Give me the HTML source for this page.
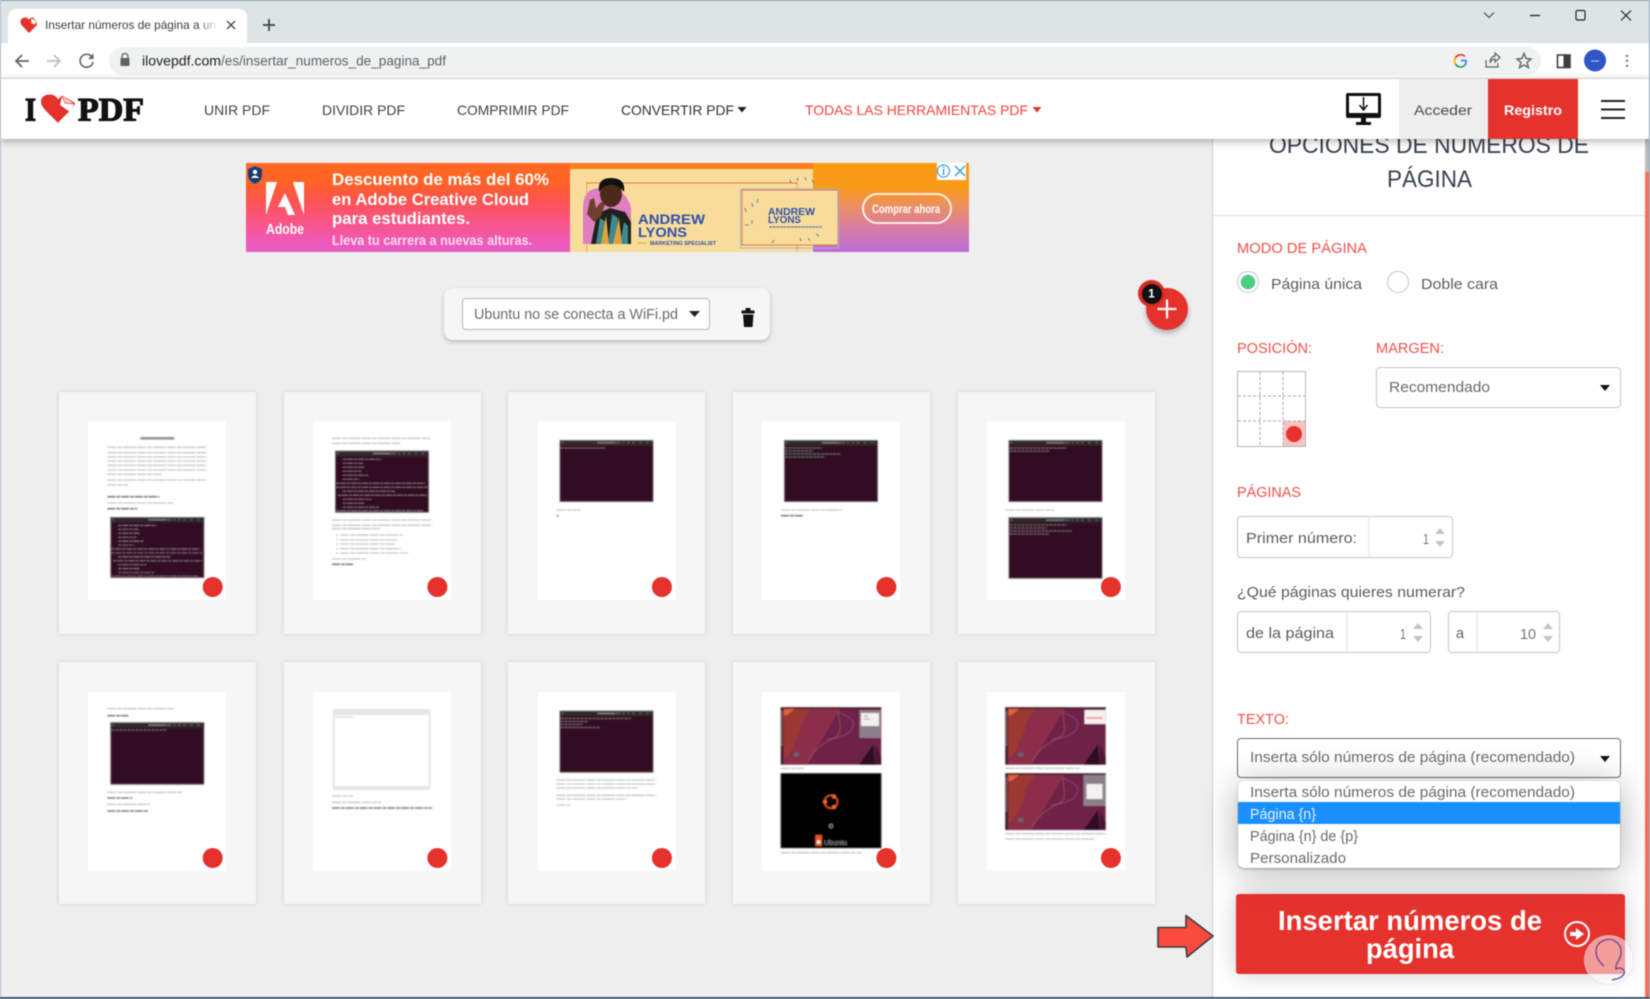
<!DOCTYPE html>
<html lang="es"><head><meta charset="utf-8"><title>Insertar números de página a un PDF</title>
<style>
html,body{margin:0;padding:0;background:#eee;width:1650px;height:999px;overflow:hidden}
#w{position:relative;width:1650px;height:999px;overflow:hidden;background:#eee;filter:blur(.4px)}
#w>div,#w>svg{position:absolute}
svg{display:block}
text{font-family:"Liberation Sans",sans-serif}
.card{width:197px;height:242px;background:#f6f6f6;box-shadow:0 0 4px rgba(0,0,0,.13)}
.pg{width:138px;height:179px;background:#fff}
.box{background:#fff;border:1px solid #c6c6c6;border-radius:4px;box-sizing:border-box}
.s{fill:#5c5c5c;font-size:15px}
.r{fill:#f0504a;font-size:15px}
.n{fill:#3f4449;font-size:14px}
.o{fill:#6a6a6a;font-size:15px}
.l{stroke:#b8b8b8;stroke-width:1.1;stroke-dasharray:9 1 5 .8 13 1;fill:none}
.d{stroke:#666;stroke-width:1.3;stroke-dasharray:8 1 4 .8;fill:none}
.sp{fill:#c4c4c4}
.th{filter:url(#b)}
</style></head><body><div id="w">

<!-- panel -->
<div style="left:1212px;top:130px;width:433px;height:867px;background:#fff;border-left:1px solid #cfcfcf;box-sizing:border-box"></div>
<div style="left:1213px;top:215px;width:432px;height:1px;background:#ddd"></div>
<div style="left:1645px;top:130px;width:4px;height:42px;background:#bdbdbd"></div>
<div style="left:1645px;top:172px;width:4px;height:825px;background:#fc6e5c"></div>

<!-- ad -->
<div style="left:246px;top:163px;width:324px;height:89px;background:linear-gradient(180deg,#ff6a22 0%,#ff6226 22%,#fd5350 42%,#f9568a 68%,#ef58b6 88%,#e55ec6 100%)"></div>
<div style="left:813px;top:163px;width:156px;height:89px;background:linear-gradient(180deg,#fc9a14 0%,#f99a1a 28%,#ec8f62 48%,#d97ea0 72%,#bd6cd8 100%)"></div>
<div style="left:570px;top:163px;width:243px;height:6px;background:#fd7d1c"></div>
<div style="left:570px;top:169px;width:243px;height:83px;background:#f8dc9a"></div>

<!-- toolbar card -->
<div style="left:444px;top:288px;width:326px;height:52px;background:#f6f6f6;border-radius:9px;box-shadow:0 2px 4px rgba(0,0,0,.22)"></div>
<div class="box" style="left:462px;top:298px;width:248px;height:32px;border-color:#b5b5bb"></div>

<!-- cards -->
<div class="card" style="left:59px;top:392px"></div><div class="card" style="left:284px;top:392px"></div><div class="card" style="left:508.4px;top:392px"></div><div class="card" style="left:733px;top:392px"></div><div class="card" style="left:958px;top:392px"></div>
<div class="card" style="left:59px;top:662px"></div><div class="card" style="left:284px;top:662px"></div><div class="card" style="left:508.4px;top:662px"></div><div class="card" style="left:733px;top:662px"></div><div class="card" style="left:958px;top:662px"></div>
<div class="pg" style="left:88.3px;top:421px"></div><div class="pg" style="left:313px;top:421px"></div><div class="pg" style="left:537.5px;top:421px"></div><div class="pg" style="left:762px;top:421px"></div><div class="pg" style="left:986.5px;top:421px"></div>
<div class="pg" style="left:88.3px;top:692px"></div><div class="pg" style="left:313px;top:692px"></div><div class="pg" style="left:537.5px;top:692px"></div><div class="pg" style="left:762px;top:692px"></div><div class="pg" style="left:986.5px;top:692px"></div>

<!-- plus -->
<div style="left:1146px;top:288px;width:42px;height:42px;border-radius:50%;background:#e5322d;box-shadow:0 3px 6px rgba(0,0,0,.28)"></div>
<div style="left:1138px;top:280px;width:27px;height:27px;border-radius:50%;background:#d92a26"></div>
<div style="left:1141.500px;top:283.500px;width:20px;height:20px;border-radius:50%;background:#111"></div>

<!-- form boxes -->
<div class="box" style="left:1376px;top:367px;width:245px;height:41px"></div>
<div class="box" style="left:1237px;top:516px;width:216px;height:42px"></div>
<div style="left:1368px;top:517px;width:2px;height:40px;background:#efefef"></div>
<div class="box" style="left:1237px;top:611px;width:194px;height:42px"></div>
<div style="left:1346px;top:612px;width:2px;height:40px;background:#efefef"></div>
<div class="box" style="left:1448px;top:611px;width:112px;height:42px"></div>
<div style="left:1476px;top:612px;width:2px;height:40px;background:#efefef"></div>
<div class="box" style="left:1237px;top:738px;width:384px;height:40px;border-color:#6d6d6d"></div>
<div style="left:1236px;top:894px;width:389px;height:80px;background:#e5322d;border-radius:3px;box-shadow:0 0 24px rgba(0,0,0,.2)"></div>
<div style="left:1238px;top:781px;width:382px;height:87px;background:#fff;border-radius:6px;box-shadow:0 4px 36px rgba(0,0,0,.3),0 1px 2px rgba(0,0,0,.3)"></div>
<div style="left:1238px;top:802px;width:382px;height:22px;background:#1a90ff"></div>

<svg width="1650" height="999" viewBox="0 0 1650 999" style="left:0;top:0">
<defs>
<filter id="b" x="-5%" y="-5%" width="110%" height="110%"><feGaussianBlur stdDeviation=".5"/></filter>
<symbol id="term" viewBox="0 0 94 62" preserveAspectRatio="none">
<rect width="94" height="62" fill="#330a22"/><rect width="94" height="5.5" fill="#2d2b2c"/>
<path d="M38 2.8H56" stroke="#999" stroke-width="1"/><path d="M2 2.8h2M55 2.8h6M63 2.8h2M68 2.8h2M73 2.8h2M80 2.8h2M87 2.8h2" stroke="#666" stroke-width="1.2"/>
<rect x=".3" y=".3" width="93.4" height="61.4" fill="none" stroke="#8c8088" stroke-width=".6"/>
</symbol>
<symbol id="tf" viewBox="0 0 94 62" preserveAspectRatio="none">
<use href="#term" width="94" height="62"/>
<path d="M8 8.5H46M8 12.5H28M8 16.5H30M8 20.5H26M8 24.5H34M8 28.5H24M1 32.5H90M1 36.5H92M8 40.5H60M3 44.5H92M8 48.5H36M8 52.5H30M8 56.5H44M1 60H88" stroke="#a08c98" stroke-width=".7" stroke-dasharray="3 1 6 1" fill="none"/>
</symbol>
<symbol id="wp" viewBox="0 0 100 57" preserveAspectRatio="none">
<rect width="100" height="57" fill="#6e2447"/>
<path d="M3 0H60L26 57H3Z" fill="#8c2e48"/><path d="M3 0H32Q18 14 20 22L8 48 3 50Z" fill="#9c3732"/>
<path d="M3 0H16L6 8H3Z" fill="#e0623c"/><path d="M0 0H100V1.5H0Z" fill="#2c1420"/>
<path d="M78 57L92 37 94 57Z" fill="#2f0f22"/><path d="M94 57V37L100 50V57Z" fill="#4a1733"/>
<path d="M27 53C35 40 42 36 54 30 62 26 58 14 57 4" stroke="#a8685a" stroke-width="1" stroke-dasharray="1.4 1.2" fill="none"/>
<path d="M46 32C58 30 70 28 72 18 73 10 62 8 57 4" stroke="#9a4c9c" stroke-width="1.1" stroke-dasharray="1.4 1" fill="none"/>
<path d="M0 0H2.5V57H0Z" fill="#3a2030"/><path d="M1.2 4V38" stroke="#a8806c" stroke-width="1.2" stroke-dasharray="1.5 1"/>
<rect x="13" y="45" width="5" height="4" fill="#5a6a70"/>
</symbol>
<linearGradient id="fd" x1="0" x2="1" y1="0" y2="0"><stop offset="0" stop-color="#fff" stop-opacity="0"/><stop offset="1" stop-color="#fff"/></linearGradient>
</defs>

<!-- Ad content -->
<g fill="#fff" font-weight="bold">
<text x="332" y="185" font-size="17" textLength="217" lengthAdjust="spacingAndGlyphs">Descuento de más del 60%</text>
<text x="332" y="205" font-size="17" textLength="197" lengthAdjust="spacingAndGlyphs">en Adobe Creative Cloud</text>
<text x="332" y="224" font-size="17" textLength="138" lengthAdjust="spacingAndGlyphs">para estudiantes.</text>
<text x="332" y="245" font-size="13.5" fill="#fde" textLength="200" lengthAdjust="spacingAndGlyphs">Lleva tu carrera a nuevas alturas.</text>
<text x="266" y="234" font-size="15" font-weight="bold" textLength="38" lengthAdjust="spacingAndGlyphs">Adobe</text>
</g>
<path d="M266 182H277L266 215ZM293 182H304V215ZM285 193L295 215H288L285 207H278Z" fill="#fff"/>
<path d="M255 166L262 169V175Q262 181 255 184 248 181 248 175V169Z" fill="#23386a" stroke="#56709c" stroke-width=".7"/>
<circle cx="255" cy="172" r="2.2" fill="#fff"/><path d="M251 178Q255 173 259 178" fill="#fff"/>
<rect x="937" y="163" width="29" height="17" fill="#fff"/>
<circle cx="943.5" cy="171" r="6" fill="none" stroke="#3aa0d8" stroke-width="1.2"/><path d="M943.5 169V175M943.5 166.5V168" stroke="#3aa0d8" stroke-width="1.5"/>
<path d="M955 166L965 176M965 166L955 176" stroke="#3aa0d8" stroke-width="1.5"/>
<path d="M587 252V183H797V252" fill="none" stroke="#f0763a" stroke-width="1"/>
<rect x="587" y="184" width="210" height="68" fill="#f8dc9a"/>
<path d="M583 244V208Q583 188 600 188 626 186 631 208V244Z" fill="#dd7fc0"/>
<path d="M591 244L597 214 610 208 625 212 631 222V244Z" fill="#22201e"/>
<path d="M596 244L600 218 606 222 604 244ZM608 244L612 214 618 218 616 244ZM620 244L624 222 628 226 628 244Z" fill="#3f8a8c"/>
<path d="M601 244L606 216 609 244M613 244L619 218 622 244" fill="#e0a23c"/>
<ellipse cx="611" cy="194" rx="11" ry="13" fill="#4b2a1b"/>
<path d="M599 192Q597 178 611 178 626 178 624 192 618 184 610 185 603 185 599 192Z" fill="#111"/>
<path d="M596 208L601 202 605 204 601 216 594 222 587 214 590 200 594 198Z" fill="#6e4030"/>
<g fill="#2f50ae" font-weight="bold">
<text x="638" y="224" font-size="14" textLength="67" lengthAdjust="spacingAndGlyphs">ANDREW</text>
<text x="638" y="237" font-size="14" textLength="49" lengthAdjust="spacingAndGlyphs">LYONS</text>
<text x="650" y="245" font-size="5" textLength="66" lengthAdjust="spacingAndGlyphs">MARKETING SPECIALIST</text>
</g>
<path d="M638 243H647" stroke="#f0a030"/>
<rect x="742" y="190" width="96" height="55" fill="#f8dc9a" stroke="#f0763a"/>
<rect x="740.5" y="189" width="98" height="59" fill="none" stroke="#8fb8e4" stroke-width=".9"/>
<g fill="#2f50ae" font-weight="bold">
<text x="768" y="215" font-size="10" textLength="47" lengthAdjust="spacingAndGlyphs">ANDREW</text>
<text x="768" y="223" font-size="10" textLength="33" lengthAdjust="spacingAndGlyphs">LYONS</text>
</g>
<path d="M769 227H822" stroke="#6a7aa8" stroke-width="1.3" stroke-dasharray="3 .6"/>
<path d="M745 208l1 4M752 203l1 4M758 199l-1 4M745 225h4M752 220v4M772 243l2-3M805 177l1 3M798 178l-1 3M790 180l1 3M812 180l2 3M816 234l3 2M808 238l2 3M800 238l1 3" stroke="#4a6ea8" stroke-width=".8"/>
<rect x="863" y="194" width="88" height="29" rx="14.5" fill="none" stroke="#fff" stroke-width="1.8" opacity=".95"/>
<text x="872" y="213" font-size="11.5" font-weight="bold" fill="#fff" textLength="68" lengthAdjust="spacingAndGlyphs">Comprar ahora</text>

<!-- file select -->
<text x="474" y="319" font-size="15" fill="#6a6a6a" textLength="204" lengthAdjust="spacingAndGlyphs">Ubuntu no se conecta a WiFi.pd</text>
<path d="M689 311H700L694.500 317Z" fill="#222"/>
<path d="M741.500 310.500H754.500V313.500H741.500ZM745.500 308H750.500V310.500H745.500ZM743 314.500H753.500L752.500 327H744Z" fill="#111"/>

<!-- plus glyph -->
<path d="M1167 299.500V318.500M1157.500 309H1176.500" stroke="#fff" stroke-width="2.200"/>
<text x="1151.500" y="297.500" font-size="12" font-weight="bold" fill="#fff" text-anchor="middle">1</text>

<!-- Page 1 -->
<g class="th" transform="translate(88.300 421)">
<path d="M52 17.300H86" stroke="#8a8a8a" stroke-width="2.400"/>
<path class="l" d="M19 26.300H119M19 31.700H119M19 36H119M19 40H119M19 44.300H119M19 49H119M19 53.300H73M19 59H119M19 64H40"/>
<path class="d" d="M19 75.700H71M19 87.700H49"/><path class="l" d="M19 82H85"/>
<use href="#tf" x="22" y="96" width="94" height="61"/>
</g>
<!-- Page 2 -->
<g class="th" transform="translate(313 421)">
<path class="l" d="M19 17.300H118M19 22.300H87M19 99H119M19 104.300H119M19 107.700H67M27 114H90M27 119H84M27 123H82M27 127.700H88M27 132H95M19 138H53"/>
<path d="M23.700 114h1M23.700 119h1M23.700 123h1M23.700 127.700h1M23.700 132h1" stroke="#777"/>
<path class="d" d="M19 143.300H40"/>
<use href="#tf" x="22" y="29.700" width="94" height="62"/>
</g>
<!-- Page 3 -->
<g class="th" transform="translate(537.500 421)">
<use href="#term" x="22" y="19" width="94" height="62"/>
<path d="M23 27H68" stroke="#98808e" stroke-width=".7" stroke-dasharray="3 1"/>
<path class="l" d="M19 89H43"/><path class="d" d="M19 94.700H21"/>
</g>
<!-- Page 4 -->
<g class="th" transform="translate(762 421)">
<use href="#term" x="22" y="19" width="94" height="62"/>
<path d="M23 27H60M23 30H50M23 33H78M23 36H62" stroke="#7c8c84" stroke-width=".7" stroke-dasharray="3 1"/>
<path class="l" d="M19 89H80"/><path class="d" d="M19 94.700H41"/>
</g>
<!-- Page 5 -->
<g class="th" transform="translate(986.500 421)">
<use href="#term" x="22" y="19" width="94" height="62"/>
<path d="M23 27H80M23 30H62" stroke="#98808e" stroke-width=".7" stroke-dasharray="3 1"/>
<path class="l" d="M19 89H67"/>
<use href="#term" x="22" y="96.300" width="94" height="61.400"/>
<path d="M23 104H80M23 107H60M23 110H85M23 113H62" stroke="#98808e" stroke-width=".7" stroke-dasharray="3 1"/>
</g>
<!-- Page 6 -->
<g class="th" transform="translate(88.300 692)">
<path class="l" d="M19 16.700H85.500M19 100.300H94M19 112.300H61"/><path class="d" d="M19 23.700H40M19 106H44M19 119H60"/>
<use href="#term" x="22" y="30.300" width="94" height="62.400"/>
<path d="M23 38H78" stroke="#98808e" stroke-width=".8" stroke-dasharray="3 1"/>
</g>
<!-- Page 7 -->
<g class="th" transform="translate(313 692)">
<rect x="20.600" y="18" width="96" height="79.300" rx="1.500" fill="#fff" stroke="#ddd" stroke-width="1.500"/>
<rect x="20.600" y="18" width="96" height="5" fill="#e6e6e6"/><path d="M22 25H40" stroke="#ccc"/><rect x="20.600" y="94" width="96" height="3.300" fill="#e6e6e6"/>
<path class="l" d="M19 104H40M19 110.300H68"/><path class="d" d="M19 116H119"/>
</g>
<!-- Page 8 -->
<g class="th" transform="translate(537.500 692)">
<use href="#term" x="22" y="18.700" width="94" height="62"/>
<path d="M23 26.500H93M23 29.500H50M23 32.500H45M23 35.500H62" stroke="#98808e" stroke-width=".7" stroke-dasharray="3 1"/>
<path class="l" d="M19 88H119M19 92H119M19 96H100M19 103.300H119M19 107H90M19 113H33"/>
</g>
<!-- Page 9 -->
<g class="th" transform="translate(762 692)">
<use href="#wp" x="18.700" y="15.300" width="100.600" height="57.400"/>
<rect x="97.500" y="18" width="21" height="28" fill="#8c8088"/><rect x="99" y="21" width="18" height="13" fill="#f4f0f0"/>
<path d="M102 24h4M102 27h6" stroke="#999"/>
<path class="l" d="M19 76.300H42M19 160.700H100"/>
<rect x="18.700" y="81.300" width="100.600" height="74.700" fill="#000" stroke="#555" stroke-width=".5"/>
<circle cx="69" cy="109.700" r="6.500" fill="none" stroke="#e95420" stroke-width="1.500"/>
<circle cx="63" cy="109.700" r="2" fill="#f06a30"/><circle cx="72" cy="104.500" r="2" fill="#f06a30"/><circle cx="72" cy="115" r="2" fill="#f06a30"/>
<circle cx="69" cy="134" r="1.800" fill="none" stroke="#bbb" stroke-width=".7"/>
<rect x="53.300" y="143" width="6.700" height="11" fill="#e95420"/><circle cx="56.600" cy="150" r="1.800" fill="#fff"/>
<text x="62" y="153" font-size="7.500" fill="#999" textLength="23" lengthAdjust="spacingAndGlyphs">Ubuntu</text>
</g>
<!-- Page 10 -->
<g class="th" transform="translate(986.500 692)">
<use href="#wp" x="18.700" y="15.300" width="100.600" height="57.400"/>
<rect x="98" y="18" width="21" height="14" fill="#f6efef"/><path d="M100 26h16" stroke="#e88" stroke-width="1.500"/>
<path class="l" d="M19 76.300H94M19 141.700H119.500M19 147H109"/>
<use href="#wp" x="18.700" y="81.300" width="100.600" height="56.700"/>
<rect x="97" y="83" width="22" height="31" fill="#8c8088"/><rect x="100" y="92" width="16" height="15" fill="#f4f0f0"/>
</g>
<!-- dots -->
<g fill="#e5322d">
<circle cx="212.700" cy="587" r="10"/><circle cx="437.400" cy="587" r="10"/><circle cx="661.900" cy="587" r="10"/><circle cx="886.400" cy="587" r="10"/><circle cx="1110.900" cy="587" r="10"/>
<circle cx="212.700" cy="858" r="10"/><circle cx="437.400" cy="858" r="10"/><circle cx="661.900" cy="858" r="10"/><circle cx="886.400" cy="858" r="10"/><circle cx="1110.900" cy="858" r="10"/>
</g>

<!-- panel text -->
<text x="1269" y="153" font-size="24" fill="#38424e" textLength="320" lengthAdjust="spacingAndGlyphs">OPCIONES DE NÚMEROS DE</text>
<text x="1387" y="187" font-size="24" fill="#38424e" textLength="85" lengthAdjust="spacingAndGlyphs">PÁGINA</text>
<text class="r" x="1237" y="253" textLength="130" lengthAdjust="spacingAndGlyphs">MODO DE PÁGINA</text>
<circle cx="1248" cy="282" r="10.500" fill="#fff" stroke="#c4c4c4" stroke-width="1"/><circle cx="1248" cy="282" r="7.300" fill="#4fce84"/>
<text class="s" x="1271" y="289" textLength="91" lengthAdjust="spacingAndGlyphs">Página única</text>
<circle cx="1398" cy="282" r="10.500" fill="#fff" stroke="#c4c4c4" stroke-width="1"/>
<text class="s" x="1421" y="289" textLength="77" lengthAdjust="spacingAndGlyphs">Doble cara</text>
<text class="r" x="1237" y="353" textLength="75" lengthAdjust="spacingAndGlyphs">POSICIÓN:</text>
<text class="r" x="1376" y="353" textLength="68" lengthAdjust="spacingAndGlyphs">MARGEN:</text>
<rect x="1283" y="421" width="23" height="26" fill="#f9c4c4"/>
<rect x="1237.500" y="371.500" width="68" height="75" fill="none" stroke="#b4b4b4"/>
<path d="M1260 372V446M1283 372V446M1238 396H1305M1238 421H1305" stroke="#aaa" stroke-dasharray="3 2" fill="none"/>
<circle cx="1294" cy="434" r="8" fill="#e5322d"/>
<text class="o" x="1389" y="392" textLength="101" lengthAdjust="spacingAndGlyphs">Recomendado</text>
<path d="M1600 385H1610L1605 391Z" fill="#111"/>
<text class="r" x="1237" y="497" textLength="64" lengthAdjust="spacingAndGlyphs">PÁGINAS</text>
<text class="s" x="1246" y="543" textLength="111" lengthAdjust="spacingAndGlyphs">Primer número:</text>
<text x="1423" y="544" font-size="15" fill="#777" textLength="6" lengthAdjust="spacingAndGlyphs">1</text>
<path class="sp" d="M1435 534L1440 528 1445 534ZM1435 541L1440 547 1445 541Z"/>
<text class="s" x="1237" y="597" textLength="228" lengthAdjust="spacingAndGlyphs">¿Qué páginas quieres numerar?</text>
<text class="s" x="1246" y="638" textLength="88" lengthAdjust="spacingAndGlyphs">de la página</text>
<text x="1400" y="639" font-size="15" fill="#777" textLength="6" lengthAdjust="spacingAndGlyphs">1</text>
<path class="sp" d="M1413 629L1418 623 1423 629ZM1413 636L1418 642 1423 636Z"/>
<text class="s" x="1456" y="638" textLength="8" lengthAdjust="spacingAndGlyphs">a</text>
<text x="1520" y="639" font-size="15" fill="#777" textLength="16" lengthAdjust="spacingAndGlyphs">10</text>
<path class="sp" d="M1543 629L1548 623 1553 629ZM1543 636L1548 642 1553 636Z"/>
<text class="r" x="1237" y="724" textLength="52" lengthAdjust="spacingAndGlyphs">TEXTO:</text>
<text class="o" x="1250" y="762" textLength="325" lengthAdjust="spacingAndGlyphs">Inserta sólo números de página (recomendado)</text>
<path d="M1600 756H1610L1605 762Z" fill="#111"/>
<text class="o" x="1250" y="797" textLength="325" lengthAdjust="spacingAndGlyphs">Inserta sólo números de página (recomendado)</text>
<text x="1250" y="819" font-size="15" fill="#e8f3ff" textLength="66" lengthAdjust="spacingAndGlyphs">Página {n}</text>
<text class="o" x="1250" y="841" textLength="108" lengthAdjust="spacingAndGlyphs">Página {n} de {p}</text>
<text class="o" x="1250" y="863" textLength="96" lengthAdjust="spacingAndGlyphs">Personalizado</text>
<text x="1278" y="930" font-size="28" font-weight="bold" fill="#fff" textLength="264" lengthAdjust="spacingAndGlyphs">Insertar números de</text>
<text x="1366" y="958" font-size="28" font-weight="bold" fill="#fff" textLength="88" lengthAdjust="spacingAndGlyphs">página</text>
<circle cx="1577" cy="934" r="12" fill="none" stroke="#fff" stroke-width="2"/>
<path d="M1570 932H1576V928L1584 934 1576 940V936H1570Z" fill="#fff"/>
<!-- watermark -->
<circle cx="1609" cy="960" r="24.500" fill="#fff" fill-opacity=".52" stroke="#ddd" stroke-opacity=".6"/>
<path d="M1604 966C1594 958 1593 945 1603 941 1612 936 1622 943 1621 954 1620 961 1615 963 1616 969 1620 966 1626 970 1624 974 1621 979 1615 979 1612 980" fill="none" stroke="#6a3f98" stroke-width="1.300"/>
<!-- red arrow -->
<path d="M1158 927.500H1186V915.500L1213 936 1187 957 1186 947H1158Z" fill="#fb4a3e" stroke="#3c3c3c" stroke-width="1.600" stroke-linejoin="round"/>
</svg>

<!-- browser chrome + header -->
<div style="left:0;top:0;width:1650px;height:43px;background:#dee4e6"></div>
<div style="left:8px;top:9px;width:239px;height:34px;background:#fff;border-radius:8px 8px 0 0"></div>
<div style="left:0;top:43px;width:1650px;height:36px;background:#fff"></div>
<div style="left:109px;top:47px;width:1432px;height:28px;background:#f0f1f1;border-radius:14px"></div>
<div style="left:0;top:78px;width:1650px;height:1px;background:#e6e6e6"></div>
<div style="left:0;top:79px;width:1650px;height:60px;background:#fff;box-shadow:0 2px 8px rgba(0,0,0,.32)"></div>
<div style="left:1399px;top:79px;width:89px;height:60px;background:#eee"></div>
<div style="left:1488px;top:79px;width:90px;height:60px;background:#e5322d"></div>

<svg width="1650" height="140" viewBox="0 0 1650 140" style="left:0;top:0">
<defs><linearGradient id="fd2" x1="0" x2="1" y1="0" y2="0"><stop offset="0" stop-color="#fff" stop-opacity="0"/><stop offset="1" stop-color="#fff"/></linearGradient></defs>
<!-- favicon -->
<path d="M29 33L21.500 25Q19 21 22 18.500 26 16 29 19.500 32 16 34 18.500L36 22 37 25Z" fill="#e5322d"/><path d="M31 18L36 21 35 25 31 23Z" fill="#fff" stroke="#e5322d" stroke-width=".5"/>
<text x="45" y="29" font-size="12" fill="#3c4043" textLength="171" lengthAdjust="spacingAndGlyphs">Insertar números de página a un</text>
<rect x="198" y="14" width="20" height="22" fill="url(#fd2)"/>
<path d="M227 21L235 29M235 21L227 29" stroke="#45494d" stroke-width="1.400"/>
<path d="M269 19V31M263 25H275" stroke="#3c4043" stroke-width="1.700"/>
<!-- toolbar -->
<path d="M29 61H16M22 55L16 61 22 67" fill="none" stroke="#5f6368" stroke-width="1.700"/>
<path d="M47 61H60M54 55L60 61 54 67" fill="none" stroke="#bcc0c4" stroke-width="1.700"/>
<path d="M92.500 58A6.500 6.500 0 1 0 93 62" fill="none" stroke="#5f6368" stroke-width="1.600"/><path d="M93.500 53.500V59H88Z" fill="#5f6368"/>
<path d="M122 58V56.500A3 3 0 0 1 128 56.500V58" fill="none" stroke="#5f6368" stroke-width="1.300"/><rect x="120.500" y="58" width="9" height="8" rx="1" fill="#5f6368"/>
<text x="142" y="65.500" font-size="13.500" fill="#202124" textLength="79" lengthAdjust="spacingAndGlyphs">ilovepdf.com</text>
<text x="221" y="65.500" font-size="13.500" fill="#5f6368" textLength="225" lengthAdjust="spacingAndGlyphs">/es/insertar_numeros_de_pagina_pdf</text>
<!-- G -->
<path d="M1465 56.500A6 6 0 0 0 1455.400 58" fill="none" stroke="#ea4335" stroke-width="1.800"/>
<path d="M1455.400 58A6 6 0 0 0 1455.400 64" fill="none" stroke="#fbbc05" stroke-width="1.800"/>
<path d="M1455.400 64A6 6 0 0 0 1464.500 65.500" fill="none" stroke="#34a853" stroke-width="1.800"/>
<path d="M1464.500 65.500A6 6 0 0 0 1466 60.500H1461" fill="none" stroke="#4285f4" stroke-width="1.800"/>
<path d="M1486 60V67H1498V63M1490 63C1490 58 1493 56 1495 56V53L1500 57.500 1495 62V59C1493 59 1491 60 1490 63Z" fill="none" stroke="#5f6368" stroke-width="1.200"/>
<path d="M1524 53.500L1526 58.500 1531 59 1527 62.500 1528.500 67.500 1524 65 1519.500 67.500 1521 62.500 1517 59 1522 58.500Z" fill="none" stroke="#5f6368" stroke-width="1.400"/>
<rect x="1557.500" y="55" width="12.500" height="12.500" fill="none" stroke="#3c4043" stroke-width="1.600"/><rect x="1563.500" y="55" width="6.500" height="12.500" fill="#3c4043"/>
<ellipse cx="1595" cy="60.500" rx="11" ry="11" fill="#2f55c8"/>
<path d="M1591 61h8" stroke="#a9d4ee" stroke-width="1"/>
<path d="M1627 55v1.800M1627 60v1.800M1627 65v1.800" stroke="#5f6368" stroke-width="2.200"/>
<!-- window -->
<path d="M1484 12.500L1489 17.500 1494 12.500" fill="none" stroke="#3c4043" stroke-width="1.100"/>
<path d="M1530 15.500H1540" stroke="#222" stroke-width="1.300"/>
<rect x="1576" y="10.500" width="9" height="9.500" rx="1.500" fill="none" stroke="#222" stroke-width="1.200"/>
<path d="M1621 10.500L1631 20.500M1631 10.500L1621 20.500" stroke="#222" stroke-width="1.200"/>
<!-- logo -->
<text x="25" y="120.500" font-size="33" font-weight="bold" fill="#111" stroke="#111" stroke-width="1.200" style="font-family:'Liberation Serif',serif" textLength="11" lengthAdjust="spacingAndGlyphs">I</text>
<path d="M58 123C50 114 41 108 41 102 41 96 46 94.500 50 94.500 54 94.500 57 97 58 99.500L62 95.500 75 103C73 109 66 114 58 123Z" fill="#e5322d"/>
<path d="M62 96L74 104 70 112 60 105Z" fill="#fff"/>
<path d="M62 96L65 103 74 104" fill="#f8d4d2" stroke="#e5322d" stroke-width=".7"/>
<text x="78" y="120.500" font-size="33" font-weight="bold" fill="#111" stroke="#111" stroke-width="1.200" style="font-family:'Liberation Serif',serif" textLength="66" lengthAdjust="spacingAndGlyphs">PDF</text>
<!-- nav -->
<text class="n" x="204" y="115" textLength="66" lengthAdjust="spacingAndGlyphs">UNIR PDF</text>
<text class="n" x="322" y="115" textLength="83" lengthAdjust="spacingAndGlyphs">DIVIDIR PDF</text>
<text class="n" x="457" y="115" textLength="112" lengthAdjust="spacingAndGlyphs">COMPRIMIR PDF</text>
<text class="n" x="621" y="115" textLength="113" lengthAdjust="spacingAndGlyphs" style="fill:#2d3238">CONVERTIR PDF</text>
<path d="M737.500 107H746.500L742 112.500Z" fill="#222"/>
<text x="805" y="115" font-size="14" fill="#f0443e" textLength="223" lengthAdjust="spacingAndGlyphs">TODAS LAS HERRAMIENTAS PDF</text>
<path d="M1032.500 107H1041.500L1037 112.500Z" fill="#e5322d"/>
<!-- desktop -->
<rect x="1346" y="93" width="35" height="25" rx="2" fill="#111"/><rect x="1349" y="96" width="29" height="17" fill="#fff"/>
<path d="M1361 118H1366V122H1371V125H1356V122H1361Z" fill="#111"/>
<path d="M1363.500 97V109M1359.500 105L1363.500 110 1367.500 105" fill="none" stroke="#111" stroke-width="1.500"/>
<text x="1414" y="115" font-size="14" fill="#47494d" textLength="58" lengthAdjust="spacingAndGlyphs">Acceder</text>
<text x="1504" y="115" font-size="14" font-weight="bold" fill="#fff" textLength="58" lengthAdjust="spacingAndGlyphs">Registro</text>
<path d="M1601 101H1625M1601 109.500H1625M1601 118H1625" stroke="#222" stroke-width="2"/>
<!-- frame -->
<path d="M0 .5H1650" stroke="#7f97ae"/>
</svg>
<div style="left:0;top:0;width:1px;height:999px;background:#a9bac8"></div>
<div style="left:1649px;top:0;width:1px;height:999px;background:#8aa0b4"></div>
<div style="left:0;top:997px;width:1650px;height:2px;background:#3d5670"></div>
</div></body></html>
